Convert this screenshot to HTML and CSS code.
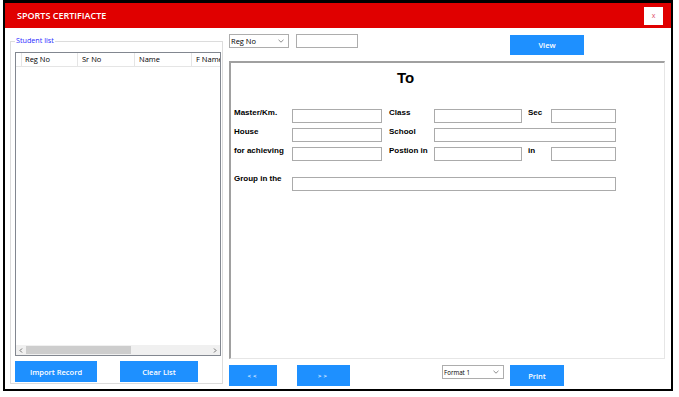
FILE: index.html
```html
<!DOCTYPE html>
<html lang="en">
  <head>
    <meta charset="UTF-8" />
    <title>Sports Certificate</title>
    <link rel="stylesheet" href="styles.css">
  </head>
  <body>
    <div class="window">
      <div class="titleBar">
        <span class="title">SPORTS CERTIFIACTE</span>
        <div class="closeBtn">x</div>
      </div>
      <div class="formBody">
        <fieldset class="studentList">
          <legend>Student list</legend>
          <div class="listView">
            <div class="lvHeader">
              <div class="lvCol lvFirst"></div>
              <div class="lvCol colReg">Reg No</div>
              <div class="lvCol colSr">Sr No</div>
              <div class="lvCol colName">Name</div>
              <div class="lvCol colF">F Name</div>
            </div>
            <div class="lvRows"></div>
            <div class="hScroll">
              <div class="arrow">
                <svg width="4" height="5" viewBox="0 0 4 5"><polyline points="3,0.5 1,2.5 3,4.5" fill="none" stroke="#606060" stroke-width="0.9"/></svg>
              </div>
              <div class="track"><div class="thumb"></div></div>
              <div class="arrow">
                <svg width="4" height="5" viewBox="0 0 4 5"><polyline points="1,0.5 3,2.5 1,4.5" fill="none" stroke="#606060" stroke-width="0.9"/></svg>
              </div>
            </div>
          </div>
          <div class="listButtons">
            <button class="blueBtn importBtn">Import Record</button>
            <button class="blueBtn clearBtn">Clear List</button>
          </div>
        </fieldset>

        <div class="rightSide">
          <div class="searchRow">
            <div class="combo regCombo">
              <span>Reg No</span>
              <svg width="6" height="4" viewBox="0 0 6 4"><polyline points="0.5,0.8 3,3.2 5.5,0.8" fill="none" stroke="#707070" stroke-width="0.8"/></svg>
            </div>
            <input class="searchInput" type="text" />
            <button class="blueBtn viewBtn">View</button>
          </div>

          <div class="certPanel">
            <div class="certTo">To</div>
            <div class="certGrid">
              <div class="fLabel">Master/Km.</div>
              <input class="fBox" type="text" />
              <div class="fLabel midLabel">Class</div>
              <input class="fBox" type="text" />
              <div class="fLabel endLabel">Sec</div>
              <input class="fBox" type="text" />

              <div class="fLabel">House</div>
              <input class="fBox" type="text" />
              <div class="fLabel midLabel">School</div>
              <input class="fBox wideSchool" type="text" />

              <div class="fLabel">for achieving</div>
              <input class="fBox" type="text" />
              <div class="fLabel midLabel">Postion in</div>
              <input class="fBox" type="text" />
              <div class="fLabel endLabel">in</div>
              <input class="fBox" type="text" />

              <div class="fLabel groupLabel">Group in the</div>
              <input class="fBox wideGroup" type="text" />
            </div>
          </div>

          <div class="bottomRow">
            <button class="blueBtn navBtn prevBtn">&lt;&lt;</button>
            <button class="blueBtn navBtn nextBtn">&gt;&gt;</button>
            <div class="combo formatCombo">
              <span>Format 1</span>
              <svg width="6" height="4" viewBox="0 0 6 4"><polyline points="0.5,0.8 3,3.2 5.5,0.8" fill="none" stroke="#707070" stroke-width="0.8"/></svg>
            </div>
            <button class="blueBtn printBtn">Print</button>
          </div>
        </div>
      </div>
    </div>
  </body>
</html>
```

FILE: styles.css
```css
html,
body {
  margin: 0;
  padding: 0;
  background-color: #fff;
  font-family: 'Open Sans', 'Noto Sans', sans-serif;
  color: #000;
}

.window {
  box-sizing: border-box;
  width: 670px;
  height: 391px;
  margin-left: 3px;
  border: 2px solid #000;
  border-top-width: 3px;
  display: flex;
  flex-direction: column;
}

.titleBar {
  height: 25px;
  flex: none;
  background-color: #e00000;
  display: flex;
  align-items: center;
  justify-content: space-between;
  padding: 0 8px 0 12px;
}

.title {
  color: #fff;
  font-weight: 600;
  font-size: 9px;
}

.closeBtn {
  width: 19px;
  height: 18px;
  background-color: #fff;
  color: #e0506a;
  font-size: 7px;
  display: flex;
  align-items: center;
  justify-content: center;
}

.formBody {
  flex: 1;
  display: flex;
  align-items: flex-start;
}

/* student list group */

.studentList {
  box-sizing: border-box;
  width: 213px;
  min-width: 0;
  margin: 7px 0 0 5px;
  padding: 0 1px 1px 4px;
  border: 1px solid #dcdcdc;
}

.studentList legend {
  font-size: 7.2px;
  line-height: 10px;
  color: #2a2aff;
  padding: 0 1px 3px;
}

.listView {
  box-sizing: border-box;
  width: 206px;
  height: 304px;
  margin-top: 4px;
  border: 1px solid #828790;
  display: flex;
  flex-direction: column;
}

.lvHeader {
  box-sizing: border-box;
  height: 14px;
  display: flex;
  overflow: hidden;
  white-space: nowrap;
  border-bottom: 1px solid #e5e5e5;
  font-size: 7.5px;
  line-height: 13px;
}

.lvCol {
  box-sizing: border-box;
  flex: none;
  padding-left: 4px;
  border-right: 1px solid #e5e5e5;
}

.lvFirst {
  width: 6px;
  padding: 0;
}

.colReg {
  width: 56px;
  padding-left: 3px;
}

.colSr,
.colName {
  width: 57px;
}

.colF {
  width: 40px;
  border-right: 0;
}

.lvRows {
  flex: 1;
}

.hScroll {
  height: 10px;
  display: flex;
  background-color: #f0f0f0;
}

.arrow {
  width: 10px;
  display: flex;
  align-items: center;
  justify-content: center;
}

.track {
  flex: 1;
  display: flex;
  padding: 1px 0;
}

.thumb {
  width: 105px;
  background-color: #cdcdcd;
}

.listButtons {
  display: flex;
  gap: 23px;
  margin-top: 5px;
}

.blueBtn {
  height: 21px;
  padding: 0;
  border: 0;
  background-color: #1e90ff;
  color: #fff;
  font-family: inherit;
  font-weight: 600;
  font-size: 7.5px;
}

.importBtn {
  width: 82px;
}

.clearBtn {
  width: 78px;
}

/* right side */

.rightSide {
  width: 436px;
  margin-left: 6px;
  padding-top: 6px;
  display: flex;
  flex-direction: column;
}

.searchRow {
  height: 21px;
  display: flex;
  align-items: flex-start;
}

.combo {
  box-sizing: border-box;
  height: 14px;
  border: 1px solid #adadad;
  background-color: #fff;
  display: flex;
  align-items: center;
  justify-content: space-between;
  padding: 0 4px 0 1px;
  font-size: 7.5px;
}

.regCombo {
  width: 60px;
}

.searchInput {
  box-sizing: border-box;
  width: 62px;
  height: 14px;
  margin: 0 0 0 7px;
  padding: 0;
  border: 1px solid #adadad;
}

.viewBtn {
  width: 74px;
  height: 20px;
  margin: 1px 0 0 152px;
}

.certPanel {
  box-sizing: border-box;
  height: 298px;
  margin-top: 6px;
  border-top: 2px solid #a0a0a0;
  border-left: 2px solid #a0a0a0;
  border-right: 1px solid #e6e6e6;
  border-bottom: 1px solid #e6e6e6;
}

.certTo {
  margin: 6px 0 0 166px;
  font-family: 'Liberation Sans', Arial, sans-serif;
  font-weight: 700;
  font-size: 15px;
  line-height: 18px;
}

.certGrid {
  display: grid;
  grid-template-columns: 58px 90px 52px 88px 29px 65px;
  grid-template-rows: 14px 14px 14px 6px 14px;
  row-gap: 5px;
  margin: 22px 0 0 3px;
}

.fLabel {
  font-family: 'Liberation Sans', Arial, sans-serif;
  font-weight: 700;
  font-size: 8px;
  line-height: 8px;
  white-space: nowrap;
}

.midLabel {
  padding-left: 7px;
}

.endLabel {
  padding-left: 6px;
}

.fBox {
  box-sizing: border-box;
  width: 100%;
  height: 14px;
  margin: 0;
  padding: 0;
  border: 1px solid #ababab;
}

.wideSchool {
  grid-column: 4 / 7;
}

.groupLabel {
  grid-row: 5;
  margin-top: -2px;
}

.wideGroup {
  grid-row: 5;
  grid-column: 2 / 7;
}

.bottomRow {
  display: flex;
  align-items: flex-start;
  margin-top: 6px;
}

.navBtn {
  font-size: 6px;
  letter-spacing: 2px;
}

.prevBtn {
  width: 48px;
}

.nextBtn {
  width: 53px;
  margin-left: 20px;
}

.formatCombo {
  width: 62px;
  margin-left: 92px;
  font-size: 6.2px;
}

.printBtn {
  width: 54px;
  margin-left: 6px;
}
```
